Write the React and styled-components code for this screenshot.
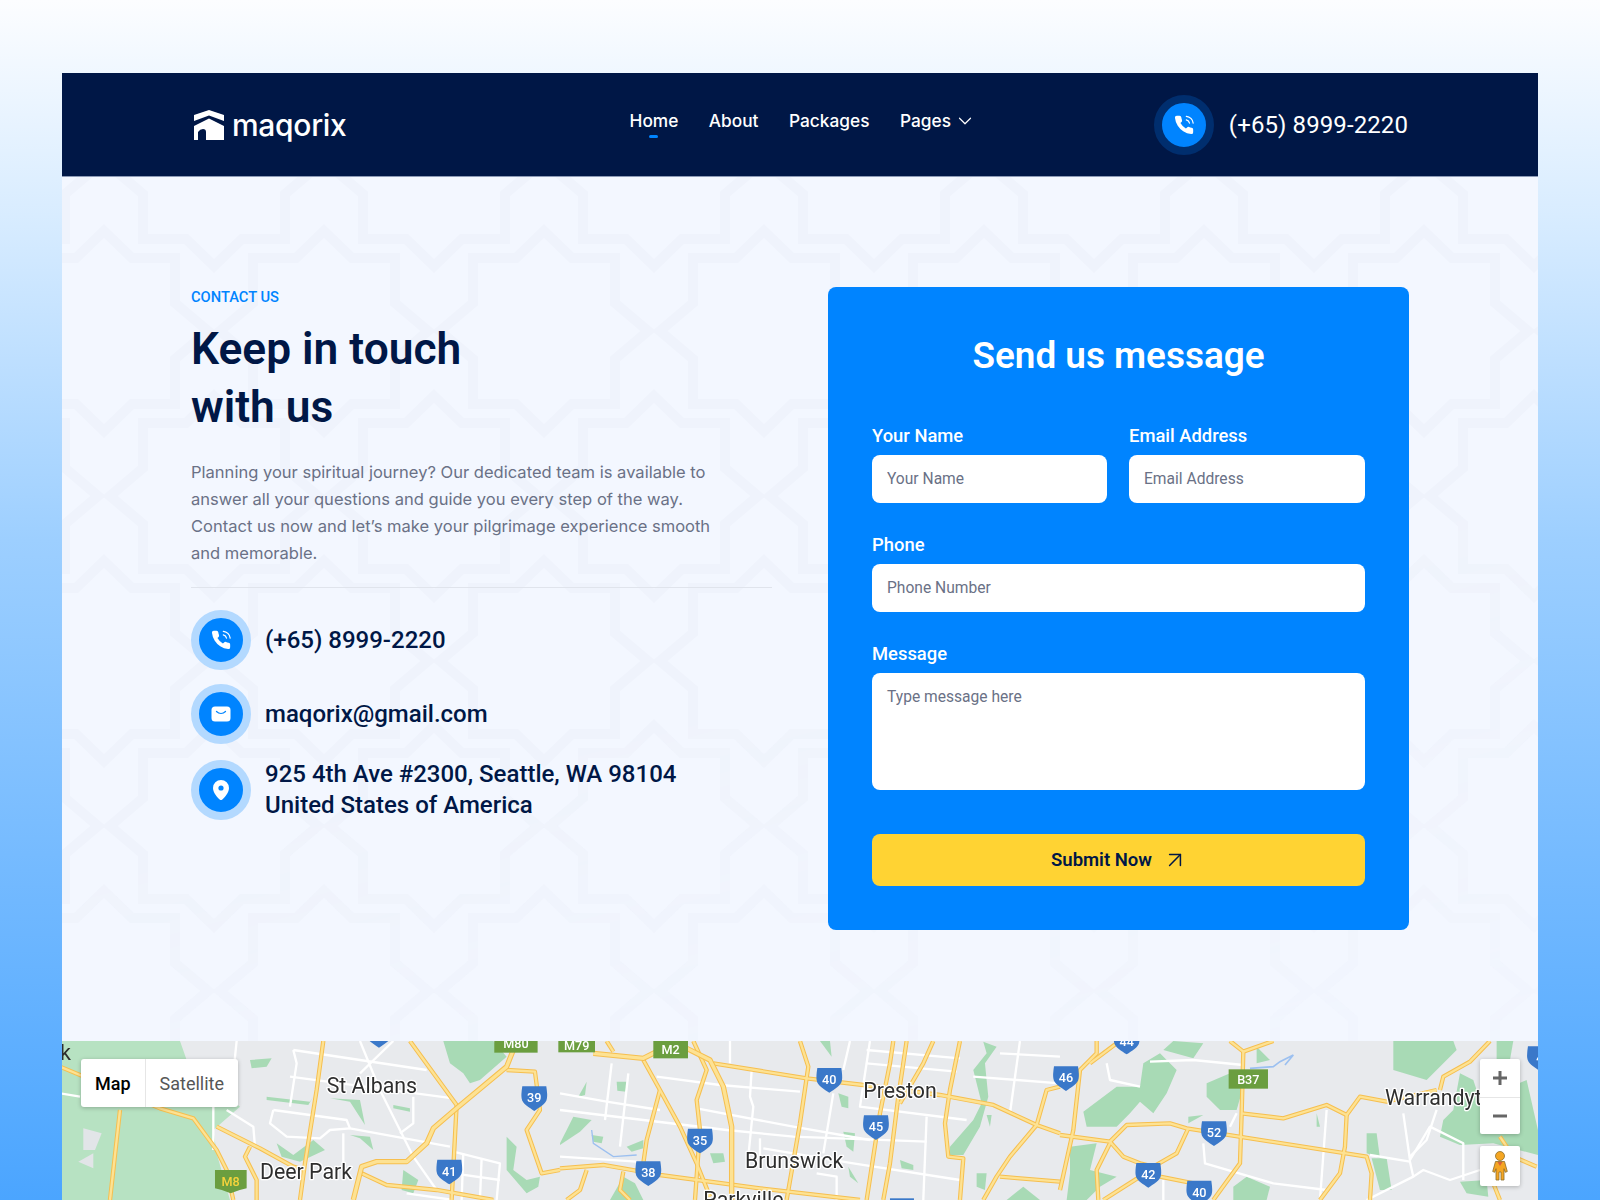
import React from 'react';
import styled, { createGlobalStyle } from 'styled-components';
import { ArrowUpRight, ChevronDown } from 'lucide-react';

const GlobalStyle = createGlobalStyle`
  html, body {
    margin: 0;
    padding: 0;
  }
  body {
    font-family: 'Inter', sans-serif;
  }
`;

const Page = styled.div`
  width: 1600px;
  height: 1200px;
  overflow: hidden;
  box-sizing: border-box;
  padding: 73px 62px 0;
  background: linear-gradient(180deg, #fcfdff 0%, #d8ecff 18%, #9dcfff 45%, #4ba5ff 100%);
`;

const Frame = styled.div`
  background: #f3f7ff;
  height: 1127px;
  display: flex;
  flex-direction: column;
`;

const Nav = styled.header`
  height: 104px;
  flex: none;
  box-sizing: border-box;
  padding: 0 129px;
  background: #001746;
  border-bottom: 1px solid #8c9ab6;
  display: grid;
  grid-template-columns: 1fr auto 1fr;
  align-items: center;
`;

const Logo = styled.a`
  display: flex;
  align-items: center;
  gap: 8px;
  margin-left: 3px;
  color: #fff;
  font: 500 30px/1 'Inter', sans-serif;
  letter-spacing: -0.3px;
`;

const Menu = styled.nav`
  display: flex;
  gap: 30.5px;
  margin-top: -7px;
  margin-left: 5.5px;
`;

const MenuItem = styled.a`
  position: relative;
  display: flex;
  align-items: center;
  gap: 3px;
  color: #fff;
  font: 500 17.3px/24px 'Inter', sans-serif;

  ${p => p.$active && `
    &::after {
      content: '';
      position: absolute;
      left: 50%;
      bottom: -5px;
      width: 9px;
      height: 3px;
      margin-left: -4.5px;
      border-radius: 2px;
      background: #0084ff;
    }
  `}
`;

const NavPhone = styled.div`
  justify-self: end;
  display: flex;
  align-items: center;
  gap: 15px;
  margin-right: 1px;
  color: #fff;
  font: 400 24px/1 'Roboto', sans-serif;
  letter-spacing: 0.1px;
`;

const IconRing = styled.span`
  width: 60px;
  height: 60px;
  flex: none;
  box-sizing: border-box;
  border-radius: 50%;
  border: 8px solid ${p => (p.$dark ? '#002e6e' : '#b3d9ff')};
  background: #0084ff;
  display: flex;
  align-items: center;
  justify-content: center;
`;

const Main = styled.main`
  position: relative;
  height: 864px;
  flex: none;
  box-sizing: border-box;
  padding: 110px 129px 111px;
  display: grid;
  grid-template-columns: 581px 581px;
  gap: 56px;
  overflow: hidden;
`;

const PatternLayer = styled.svg`
  position: absolute;
  inset: 0;
  width: 100%;
  height: 100%;
  mask-image: linear-gradient(165deg, #000 55%, rgba(0, 0, 0, 0.35) 100%);
`;

const Info = styled.section`
  position: relative;
  padding-top: 1px;
`;

const Eyebrow = styled.div`
  color: #0084ff;
  font: 500 14.7px/18px 'Roboto', sans-serif;
`;

const Title = styled.h1`
  margin: 14px 0 0;
  color: #001746;
  font: 600 44.3px/58px 'Roboto', sans-serif;
`;

const Intro = styled.p`
  margin: 23px 0 0;
  width: 530px;
  color: #6a7186;
  font: 400 16.55px/27px 'Inter', sans-serif;
`;

const Divider = styled.hr`
  margin: 20px 0 22px;
  border: 0;
  border-top: 1px solid #e0e4ec;
`;

const ContactList = styled.div`
  display: flex;
  flex-direction: column;
  gap: 14px;
`;

const ContactRow = styled.div`
  display: flex;
  align-items: center;
  gap: 14px;
  color: #001746;
  font: 500 24px/31px 'Roboto', sans-serif;
`;

const Address = styled.span`
  padding-top: 1px;
`;

const FormCard = styled.form`
  position: relative;
  box-sizing: border-box;
  height: 643px;
  padding: 44px;
  border-radius: 8px;
  background: #0084ff;
  display: flex;
  flex-direction: column;
`;

const FormTitle = styled.h2`
  margin: 0 0 42px;
  color: #fff;
  text-align: center;
  font: 600 36.9px/50px 'Roboto', sans-serif;
`;

const FieldRow = styled.div`
  display: grid;
  grid-template-columns: 235px 236px;
  gap: 22px;
`;

const Field = styled.label`
  display: flex;
  flex-direction: column;
  gap: 7px;
  margin-bottom: ${p => p.$gap || 29}px;
  color: #fff;
  font: 500 18.4px/25px 'Roboto', sans-serif;
`;

const Input = styled.input`
  height: 48px;
  box-sizing: border-box;
  padding: 0 15px;
  border: 0;
  border-radius: 8px;
  background: #fff;
  font: 400 15.6px/20px 'Roboto', sans-serif;
  &::placeholder {
    color: #6a7186;
    opacity: 1;
  }
`;

const TextArea = styled.textarea`
  height: 117px;
  box-sizing: border-box;
  padding: 14px 15px;
  border: 0;
  border-radius: 8px;
  background: #fff;
  resize: none;
  font: 400 15.6px/20px 'Roboto', sans-serif;
  &::placeholder {
    color: #6a7186;
    opacity: 1;
  }
`;

const SubmitButton = styled.button`
  height: 52px;
  flex: none;
  border: 0;
  border-radius: 8px;
  padding: 0 0 0 2px;
  background: #ffd333;
  color: #001746;
  display: flex;
  align-items: center;
  justify-content: center;
  gap: 10px;
  font: 600 18.5px/24px 'Roboto', sans-serif;
`;

const MapArea = styled.div`
  position: relative;
  flex: 1;
  overflow: hidden;
  background: #e8eaed;
`;

const MapDrawing = styled.svg`
  display: block;
  width: 1476px;
  height: 159px;
  filter: blur(0.4px);
`;

const MapTypes = styled.div`
  position: absolute;
  left: 19px;
  top: 18px;
  height: 48px;
  display: flex;
  border-radius: 3px;
  background: #fff;
  box-shadow: 0 1px 4px rgba(0, 0, 0, 0.25);
  font: 400 18px/49px 'Roboto', sans-serif;
`;

const MapType = styled.span`
  padding: 0 14px;
  color: ${p => (p.$active ? '#000' : '#565656')};
  font-weight: ${p => (p.$active ? 500 : 400)};
  border-left: ${p => (p.$active ? '0' : '1px solid #e6e6e6')};
`;

const MapControls = styled.div`
  position: absolute;
  right: 18px;
  top: 18px;
  display: flex;
  flex-direction: column;
  gap: 12px;
`;

const ControlBox = styled.div`
  width: 40px;
  border-radius: 2px;
  background: #fff;
  box-shadow: 0 1px 4px rgba(0, 0, 0, 0.25);
  display: flex;
  flex-direction: column;
  align-items: center;
`;

const ControlCell = styled.div`
  width: 100%;
  height: ${p => p.$h || 37}px;
  display: flex;
  align-items: center;
  justify-content: center;
  & + & {
    box-shadow: inset 0 1px 0 0 #e6e6e6;
  }
`;

const PhoneIcon = () => (
  <svg width="22" height="22" viewBox="0 0 24 24" fill="none">
    <path
      fill="#fff"
      d="M22 16.92v3a2 2 0 0 1-2.18 2 19.79 19.79 0 0 1-8.63-3.07 19.5 19.5 0 0 1-6-6 19.79 19.79 0 0 1-3.07-8.67A2 2 0 0 1 4.11 2h3a2 2 0 0 1 2 1.72 12.84 12.84 0 0 0 .7 2.81 2 2 0 0 1-.45 2.11L8.09 9.91a16 16 0 0 0 6 6l1.27-1.27a2 2 0 0 1 2.11-.45 12.84 12.84 0 0 0 2.81.7A2 2 0 0 1 22 16.92z"
    />
    <path stroke="#fff" strokeWidth="1.3" strokeLinecap="round" d="M14.5 6.5a4.5 4.5 0 0 1 3.5 3.5M14.5 2.5a8.5 8.5 0 0 1 7.5 7.5" />
  </svg>
);

const MailIcon = () => (
  <svg width="20" height="16" viewBox="0 0 20 16">
    <rect x="0.5" y="0.5" width="19" height="15" rx="3.5" fill="#fff" />
    <path d="M5.5 5.5c2.6 2.4 6.4 2.4 9 0" fill="none" stroke="#0084ff" strokeWidth="1.3" strokeLinecap="round" />
  </svg>
);

const PinIcon = () => (
  <svg width="16" height="20" viewBox="0 0 16 20">
    <path fill="#fff" d="M8 0a8 8 0 0 1 8 8c0 4.8-4.6 9.6-6.4 11.3a2.3 2.3 0 0 1-3.2 0C4.6 17.6 0 12.8 0 8a8 8 0 0 1 8-8z" />
    <circle cx="8" cy="8" r="2.6" fill="#0084ff" />
  </svg>
);

const LogoMark = () => (
  <svg width="30" height="30" viewBox="0 0 30 30">
    <path fill="#fff" d="M0 5 15 0l15 5v6L15 5.6 0 11z" />
    <path fill="#fff" d="M0 16 15 8.6 30 16v14H12v-8q0-3-3-3t-5 3v8H0z" />
  </svg>
);

const STAR = 'M0,-100 L28,-73 L71,-73 L71,-28 L104,0 L71,28 L71,73 L28,73 L0,100 L-28,73 L-71,73 L-71,28 L-104,0 L-71,-28 L-71,-73 L-28,-73 Z';

const Pattern = () => (
  <PatternLayer aria-hidden="true">
    <defs>
      <pattern id="stars" patternUnits="userSpaceOnUse" x="372" y="-11" width="220" height="330">
        {[[110, 165], [0, 0], [220, 0], [0, 330], [220, 330]].map(([x, y]) => (
          <path key={`${x}-${y}`} d={STAR} transform={`translate(${x} ${y})`} fill="none" stroke="#eff3fc" strokeWidth="10" />
        ))}
      </pattern>
    </defs>
    <rect width="100%" height="100%" fill="url(#stars)" />
  </PatternLayer>
);

const Shield = ({ x, y, n }) => (
  <g transform={`translate(${x} ${y})`}>
    <path d="M-36,-36 H36 Q40,-10 38,0 C36,18 14,28 0,38 C-14,28 -36,18 -38,0 Q-40,-10 -36,-36Z" fill="#3a78c9" />
    <text textAnchor="middle" y="12" fontFamily="Roboto, sans-serif" fontWeight="500" fontSize="38" fill="#fff">{n}</text>
  </g>
);

const RoadSign = ({ x, y, w = 100, n, color = '#fff', h = 56 }) => (
  <g transform={`translate(${x} ${y})`}>
    <rect x={-w / 2} y={-h / 2} width={w} height={h} fill="#6b9e3f" />
    <text textAnchor="middle" y="14" fontFamily="Roboto, sans-serif" fontWeight="500" fontSize="38" fill={color}>{n}</text>
  </g>
);

const Place = ({ x, y, children }) => (
  <text
    x={x}
    y={y}
    fontFamily="Roboto, sans-serif"
    fontSize="64"
    fill="#2e2e2e"
    stroke="#fff"
    strokeWidth="8"
    strokeLinejoin="round"
    paintOrder="stroke"
  >
    {children}
  </text>
);

const Yellow = ({ roads, w = 9 }) => (
  <>
    {roads.map(d => <polyline key={`o${d}`} points={d} fill="none" stroke="#f6bf4f" strokeWidth={w + 4} strokeLinejoin="round" />)}
    {roads.map(d => <polyline key={`i${d}`} points={d} fill="none" stroke="#fde293" strokeWidth={w - 2} strokeLinejoin="round" />)}
  </>
);

const White = ({ roads }) => (
  <>
    {roads.map(d => <polyline key={d} points={d} fill="none" stroke="#fff" strokeWidth="7" strokeLinejoin="round" />)}
  </>
);

const Greens = ({ shapes, fill = '#a8dab5' }) => (
  <>
    {shapes.map(d => <polygon key={d} points={d} fill={fill} />)}
  </>
);

const MapPiece = ({ dx, children }) => (
  <g transform={`translate(${dx} -11) scale(0.3333)`}>{children}</g>
);

const CityMap = () => (
  <MapDrawing viewBox="0 0 1476 159">
    <rect width="1476" height="159" fill="#e8eaed" />

    <MapPiece dx={-2}>
      <Greens fill="#b7e2c2" shapes={['0,33 360,33 380,90 540,230 460,300 470,370 510,510 0,510']} />
      <Greens fill="#e2e5e8" shapes={['70,295 125,310 105,360 70,360', '55,395 100,370 100,415']} />
      <Greens shapes={[
        '1150,33 1300,33 1340,80 1260,150 1230,160 1210,130 1170,100',
        '570,90 635,85 620,110 575,115',
        '620,200 750,215 760,200 745,225 620,210',
        '810,205 900,210 915,285 870,215',
        '1000,225 1050,235 1050,245 1000,235',
        '870,315 930,320 940,360 900,325',
        '650,340 700,375 760,330 795,360 720,395 665,380',
        '1030,420 1075,450 1060,490 1025,480',
        '1340,320 1370,350 1360,420 1400,450 1440,440 1435,470 1400,490 1340,420',
      ]} />
      <White roads={[
        '700,60 1100,120',
        '700,60 710,100 690,230',
        '640,240 860,270 870,295 1170,350',
        '640,240 630,280 680,320 780,325 810,300 870,295',
        '690,140 1180,205',
        '900,33 960,180 1060,380 1130,480',
        '1060,200 1060,280 1020,310',
        '1000,33 900,130',
        '530,33 520,130 460,230 460,360',
        '500,240 580,290 585,350',
        '850,310 850,400',
        '1180,365 1320,400 1310,510',
        '1210,370 1205,510',
        '1265,385 1260,510',
        '1180,430 1320,450',
        '1040,490 1180,510',
        '0,190 60,200',
      ]} />
      <Yellow roads={[
        '790,33 770,180 735,400 720,510',
        '180,240 150,510',
        '0,110 60,135 300,235 400,265 470,360 500,420 520,510',
        '470,290 600,355 700,410 735,420',
        '570,350 555,380 590,450 590,510',
        '1050,33 1190,225 1175,510',
        '905,430 980,465 1130,480 1300,510',
        '1340,120 1425,125 1440,240 1400,300 1445,430 1500,420',
      ]} />
      <Yellow w={12} roads={['880,510 905,410 950,395 1040,395 1100,340 1120,295 1190,235 1340,110 1360,60 1370,33']} />
      <Shield x={957} y={15} n="" />
      <Shield x={1423} y={205} n="39" />
      <Shield x={1168} y={425} n="41" />
      <path d="M465,420 H560 V475 Q535,480 512,490 Q490,480 465,475Z" fill="#6b9e3f" />
      <text x="512" y="468" textAnchor="middle" fontFamily="Roboto, sans-serif" fontWeight="500" fontSize="38" fill="#f6d33c">M8</text>
      <RoadSign x={1368} y={40} w={130} h={56} n="M80" />
      <Place x={800} y={190}>St Albans</Place>
      <Place x={600} y={446}>Deer Park</Place>
      <text x="0" y="90" fontFamily="Roboto, sans-serif" fontSize="65" fill="#2e2e2e">k</text>
    </MapPiece>

    <MapPiece dx={498}>
      <Greens shapes={[
        '780,33 810,33 815,80',
        '170,155 200,155 198,185 172,182',
        '80,155 55,200 75,195',
        '0,340 40,260 95,270 60,305 0,345',
        '95,315 130,320 125,340 100,335',
        '200,350 250,330 250,355 215,365',
        '450,370 490,370 495,395 460,400',
        '835,190 865,200 865,235 845,230',
        '850,305 885,310 880,365 860,350',
        '1020,390 1060,405 1060,420 1025,415',
        '865,410 895,460 870,440',
        '1170,350 1240,270 1265,220 1240,120 1280,70 1270,35 1310,50 1275,100 1285,200 1260,290 1210,375 1170,375',
        '1280,255 1295,255 1290,290',
        '1250,430 1280,430 1275,480 1250,470',
        '1340,510 1390,470 1440,510',
        '190,440 225,460 250,510 150,510',
      ]} />
      <polyline points="95,300 100,340 160,380 230,375" fill="none" stroke="#9cc0f0" strokeWidth="4" />
      <White roads={[
        '0,190 140,215 300,240',
        '0,240 500,300 700,320 1100,335',
        '410,235 700,290 930,330',
        '290,140 480,165 720,185',
        '155,100 135,270',
        '205,130 180,350',
        '510,33 510,100',
        '575,120 570,200 580,230 565,380',
        '600,325 600,410',
        '820,190 790,370',
        '930,33 900,230 1220,270',
        '870,33 850,120',
        '1380,33 1350,250',
        '1320,70 1500,80',
        '1100,260 1090,510',
        '920,60 1200,85',
        '920,100 1190,125',
        '1240,140 1500,160',
        '610,355 880,400 1200,450',
        '0,380 230,395',
        '770,430 830,440 830,510',
      ]} />
      <Yellow roads={[
        '140,33 160,65',
        '250,90 300,180 360,290 410,400 450,500',
        '300,180 260,330 250,400',
        '400,33 440,120 410,210 420,300 405,510',
        '460,100 740,145 910,165 1140,195 1300,225 1430,285 1500,310',
        '720,33 745,110 720,280 680,510',
        '0,415 130,405 300,435 600,475 900,510',
        '80,420 60,480 20,510',
        '190,425 180,480 210,510',
        '1000,33 990,100 960,250 920,510',
        '1040,33 1015,200 990,400 970,510',
        '1120,33 1090,100 1020,220',
        '1200,33 1170,180 1155,280 1165,380 1210,385 1200,510',
        '1500,170 1460,180 1430,285 1350,380 1310,440 1270,510',
        '1320,440 1500,455',
      ]} />
      <Yellow w={12} roads={['100,70 250,85 300,60 380,55 450,90 490,170 515,290 515,510']} />
      <RoadSign x={50} y={45} w={110} h={44} n="M79" />
      <RoadSign x={332} y={58} w={104} h={54} n="M2" />
      <Shield x={808} y={150} n="40" />
      <Shield x={948} y={292} n="45" />
      <Shield x={420} y={332} n="35" />
      <Shield x={265} y={430} n="38" />
      <rect x="990" y="505" width="72" height="20" fill="#3a78c9" />
      <Place x={910} y={204}>Preston</Place>
      <Place x={555} y={415}>Brunswick</Place>
      <Place x={430} y={530}>Parkville</Place>
    </MapPiece>

    <MapPiece dx={998}>
      <Greens shapes={[
        '340,33 430,40 400,85 310,60',
        '250,100 300,70 350,120 320,190 280,250 240,215 210,250 170,290 80,290 70,245 170,170 240,170',
        '30,350 110,340 90,420 170,440 120,470 80,510 20,510 30,430',
        '590,50 630,90 590,100',
        '440,160 510,130 550,170 530,240 480,240 440,200',
        '1000,33 1180,33 1190,60 1100,150 1000,120',
        '1140,320 1150,270 1180,240 1200,130 1240,150 1260,210 1400,150 1434,300 1434,375 1300,340 1200,345',
        '920,310 950,310 960,385 920,370',
        '935,385 980,385 995,480 960,480',
        '520,470 560,440 630,470 620,510 520,510',
        '1200,455 1280,450 1285,500 1220,490',
        '1310,33 1360,33 1350,90 1310,90',
        '385,260 430,255 385,280',
        '770,250 780,290 770,290',
      ]} />
      <polyline points="570,115 640,110 660,95 700,75 675,105" fill="none" stroke="#9cc0f0" strokeWidth="5" />
      <White roads={[
        '270,95 400,90 550,105',
        '140,100 150,150 240,170',
        '430,340 435,400 640,460 800,480',
        '800,240 780,510',
        '930,375 1050,395 1060,440 920,510',
        '1030,250 1050,390 1110,290 1210,340 1210,450',
        '1060,440 1090,420 1170,450 1260,420',
        '530,250 510,290',
        '310,450 310,510',
        '1130,240 1100,330 1050,380',
      ]} />
      <Yellow roads={[
        '110,33 110,70 60,120 40,300 0,480',
        '170,40 90,100',
        '510,33 550,65 640,33',
        '550,65 545,250 540,400 460,510',
        '0,315 150,335 200,285 330,280 380,295 920,380 935,430 930,510',
        '150,335 190,380 240,400 280,410 350,370 385,295',
        '150,340 110,420 115,510',
        '240,440 130,510',
        '300,440 450,470',
        '545,250 670,265 800,225 860,255 900,200 980,215 1130,180',
        '860,255 855,350 840,430 780,510',
        '1140,180 1150,140 1230,95 1290,33',
        '1320,320 1360,380 1430,410',
        '1300,460 1320,510',
      ]} />
      <Shield x={200} y={35} n="44" />
      <Shield x={18} y={145} n="46" />
      <Shield x={462} y={310} n="52" />
      <Shield x={265} y={435} n="42" />
      <Shield x={418} y={488} n="40" />
      <Shield x={1440} y={85} n="4" />
      <RoadSign x={565} y={147} w={118} h={58} n="B37" />
      <Place x={975} y={225}>Warrandyte</Place>
    </MapPiece>
  </MapDrawing>
);

const Pegman = () => (
  <svg width="16" height="30" viewBox="0 0 16 30">
    <circle cx="8" cy="5" r="4.5" fill="#f5a623" stroke="#8a6d2c" strokeWidth="0.8" />
    <path d="M3.5 10.5h9l2.8 10-2 .8-1.3-3.6V29H9V21H7v8H4V17.7l-1.3 3.6-2-.8z" fill="#f5a623" stroke="#8a6d2c" strokeWidth="0.8" />
    <path d="M5.5 11 8 15l2.5-4z" fill="#d9603a" />
  </svg>
);

export default function App() {
  return (
    <Page>
      <GlobalStyle />
      <Frame>
        <Nav>
          <Logo>
            <LogoMark />
            maqorix
          </Logo>
          <Menu>
            <MenuItem $active>Home</MenuItem>
            <MenuItem>About</MenuItem>
            <MenuItem>Packages</MenuItem>
            <MenuItem>Pages <ChevronDown size={22} strokeWidth={1.3} /></MenuItem>
          </Menu>
          <NavPhone>
            <IconRing $dark><PhoneIcon /></IconRing>
            (+65) 8999-2220
          </NavPhone>
        </Nav>

        <Main>
          <Pattern />
          <Info>
            <Eyebrow>CONTACT US</Eyebrow>
            <Title>Keep in touch<br />with us</Title>
            <Intro>
              Planning your spiritual journey? Our dedicated team is available to answer all your
              questions and guide you every step of the way. Contact us now and let’s make your
              pilgrimage experience smooth and memorable.
            </Intro>
            <Divider />
            <ContactList>
              <ContactRow>
                <IconRing><PhoneIcon /></IconRing>
                (+65) 8999-2220
              </ContactRow>
              <ContactRow>
                <IconRing><MailIcon /></IconRing>
                maqorix@gmail.com
              </ContactRow>
              <ContactRow>
                <IconRing><PinIcon /></IconRing>
                <Address>925 4th Ave #2300, Seattle, WA 98104<br />United States of America</Address>
              </ContactRow>
            </ContactList>
          </Info>

          <FormCard>
            <FormTitle>Send us message</FormTitle>
            <FieldRow>
              <Field>
                Your Name
                <Input placeholder="Your Name" />
              </Field>
              <Field>
                Email Address
                <Input placeholder="Email Address" />
              </Field>
            </FieldRow>
            <Field>
              Phone
              <Input placeholder="Phone Number" />
            </Field>
            <Field $gap={44}>
              Message
              <TextArea placeholder="Type message here" />
            </Field>
            <SubmitButton type="button">
              Submit Now
              <ArrowUpRight size={26} strokeWidth={1.4} />
            </SubmitButton>
          </FormCard>
        </Main>

        <MapArea>
          <CityMap />
          <MapTypes>
            <MapType $active>Map</MapType>
            <MapType>Satellite</MapType>
          </MapTypes>
          <MapControls>
            <ControlBox>
              <ControlCell $h={38}>
                <svg width="16" height="16" viewBox="0 0 16 16"><path d="M8 1v14M1 8h14" stroke="#666" strokeWidth="3" /></svg>
              </ControlCell>
              <ControlCell>
                <svg width="16" height="16" viewBox="0 0 16 16"><path d="M1 8h14" stroke="#666" strokeWidth="3" /></svg>
              </ControlCell>
            </ControlBox>
            <ControlBox>
              <ControlCell $h={40}><Pegman /></ControlCell>
            </ControlBox>
          </MapControls>
        </MapArea>
      </Frame>
    </Page>
  );
}
